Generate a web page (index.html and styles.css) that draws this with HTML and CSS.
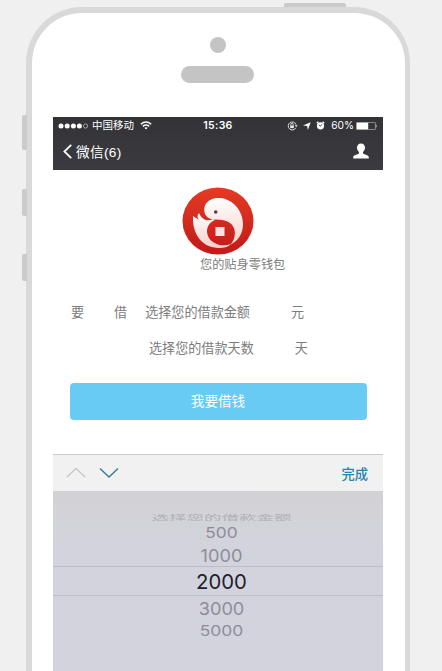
FILE: index.html
```html
<!DOCTYPE html>
<html lang="zh-CN">
<head>
<meta charset="utf-8">
<title>零钱包</title>
<link rel="stylesheet" href="styles.css">
</head>
<body>
<div class="phone">
  <i class="key power"></i><i class="key mute"></i><i class="key up"></i><i class="key down"></i>
  <div class="camera"></div>
  <div class="speaker"></div>
  <main class="screen">
    <header class="top">
      <div class="status">
        <div class="carrier">
          <svg width="31" height="8" viewBox="0 0 31 8" fill="#fff"><circle cx="3" cy="4" r="2.5"/><circle cx="9.2" cy="4" r="2.5"/><circle cx="15.4" cy="4" r="2.5"/><circle cx="21.4" cy="4" r="2.5"/><circle cx="27.6" cy="4" r="2.1" fill="none" stroke="#bbb" stroke-width=".8"/></svg>
          <span class="name">中国移动</span>
          <svg width="12" height="9" viewBox="0 0 12 9" fill="none" stroke="#fff" stroke-width="1.5"><path d="M.8 3.2Q6-1.2 11.2 3.2M2.8 5.3Q6 2.7 9.2 5.3"/><path d="M4.3 6.8Q6 5.5 7.7 6.8L6 8.5Z" fill="#fff" stroke="none"/></svg>
        </div>
        <b class="clock">15:36</b>
        <div class="indicators">
          <svg width="11" height="10" viewBox="0 0 11 10" fill="none" stroke="#eee" stroke-width=".9"><path d="M8.8 6.8A4 4 0 1 1 9 3.6"/><path d="M7.7 4.2H10.7L9.2 6Z" fill="#eee" stroke="none"/><path d="M3.2 4.6h3.6v2.5H3.2z" fill="#eee" stroke="none"/><path d="M3.8 4.7V3.6a1.2 1.2 0 0 1 2.4 0v1.1"/></svg>
          <svg width="8" height="8" viewBox="0 0 8 8" fill="#fff"><path d="M7.7.3 4.8 8 4.2 3.9 0 3.5Z"/></svg>
          <svg width="9" height="9" viewBox="0 0 9 9"><circle cx="4.5" cy="4.8" r="3.6" fill="#fff"/><path d="M.8 2.2 2.4.8M8.2 2.2 6.6.8" stroke="#fff" stroke-width="1.3"/><path d="M4.6 5.1 2.8 4M4.5 5 6.3 3.3" stroke="#37373c" stroke-width=".9"/></svg>
          <span class="percent">60%</span>
          <svg width="22" height="8" viewBox="0 0 22 8"><rect x=".4" y=".4" width="19" height="7.2" rx=".7" fill="none" stroke="#aaa" stroke-width=".8"/><path d="M.7.7h11.5v6.6H.7z" fill="#fff"/><path d="M20.2 2.3q1.3 1.7 0 3.4z" fill="#ddd"/></svg>
        </div>
      </div>
      <nav class="nav">
        <div class="back"><svg width="9" height="15" viewBox="0 0 9 15" fill="none" stroke="#fff" stroke-width="1.8"><path d="M8.2.8 1.4 7.5 8.2 14.2"/></svg><span>微信(6)</span></div>
        <svg width="16" height="16" viewBox="0 0 16 16" fill="#fff"><path d="M8 .4C10.5.4 12 2 12 4.6 12 6.7 11.2 8 10 9v1.4c1.2 1 5.1 1.6 5.6 3.1.2.7.2 1.3.2 1.9H.2c0-.6 0-1.2.2-1.9.5-1.5 4.4-2.1 5.6-3.1V9C4.8 8 4 6.7 4 4.6 4 2 5.5.4 8 .4Z"/></svg>
      </nav>
    </header>
    <section class="page">
      <svg class="logo" width="72" height="68" viewBox="0 0 72 68">
        <defs><linearGradient id="red" x1="0" y1="0" x2="0" y2="1"><stop offset="0" stop-color="#e43b24"/><stop offset="1" stop-color="#c01a1a"/></linearGradient><linearGradient id="pale" x1="0" y1="0" x2="0" y2="1"><stop offset="0" stop-color="#fff"/><stop offset="1" stop-color="#f9cfc8"/></linearGradient></defs>
        <ellipse cx="36" cy="34" rx="35.5" ry="33.6" fill="url(#red)"/>
        <path d="M23.500 28C19 17 28 10 38 11C51 12 61 24 61 37C61 47 56 54 48 58C55 51 54 40 48 36C40 30 29 36 23.500 28Z" fill="url(#pale)"/>
        <path d="M31 32C26 35 20 33 17 26C15 28 15 31 17 33C15 32 13 30 11 29C10 47 20 61 37 61C42 61 46 60 49 57C39 61 26 56 25 45C25 39 28 35 33 33Z" fill="url(#pale)"/>
        <rect x="33.5" y="40" width="9" height="9" rx=".5" fill="#fde5df"/><circle cx="33.7" cy="25" r="1.8" fill="#4d3d62"/>
      </svg>
      <p class="slogan">您的贴身零钱包</p>
      <div class="row amount"><span class="label"><span>要</span><span>借</span></span><span class="value">选择您的借款金额</span><span>元</span></div>
      <div class="row days"><span class="value">选择您的借款天数</span><span>天</span></div>
      <button class="borrow">我要借钱</button>
    </section>
    <div class="toolbar">
      <svg width="54" height="12" viewBox="0 0 54 12" fill="none" stroke-width="1.4"><path d="M1 10 10 1.5 19 10" stroke="#c5c7ca"/><path d="M34 1.5 43 10 52 1.5" stroke="#38799c"/></svg>
      <b>完成</b>
    </div>
    <div class="picker">
      <div class="option far"><span>选择您的借款金额</span></div>
      <div class="option o500"><span>500</span></div>
      <div class="option o1000"><span>1000</span></div>
      <div class="option selected"><span>2000</span></div>
      <div class="option o3000"><span>3000</span></div>
      <div class="option o5000"><span>5000</span></div>
    </div>
  </main>
</div>
</body>
</html>
```
FILE: styles.css
```css
* { box-sizing: border-box; }
body {
  margin: 0; height: 671px; overflow: hidden; background: #f0f0f1;
  padding: 7px 0 0 26px; color: #7c7c7c;
  font-family: "Liberation Sans", "Noto Sans CJK SC", sans-serif;
}
svg { display: block; flex: none; }
.phone {
  position: relative; width: 384px; height: 664px; background: #fff;
  border: 6px solid #d9d9da; border-right-width: 5px; border-bottom: 0; border-radius: 56px 56px 0 0;
  display: flex; flex-direction: column;
}
.key { position: absolute; background: #cbcbcc; left: -10px; width: 5px; border-radius: 2px 0 0 2px; }
.power { left: 252px; top: -10px; width: 62px; height: 4px; border-radius: 2px 2px 0 0; }
.mute { top: 102px; height: 35px; }
.up { top: 176px; height: 27px; }
.down { top: 241px; height: 27px; }
.camera { width: 16px; height: 16px; border-radius: 50%; background: #c4c4c4; margin: 24px 0 0 178px; }
.speaker { width: 73px; height: 17px; border-radius: 9px; background: #c4c4c4; margin: 13px 0 0 149px; }
.screen { width: 330px; margin: 34px 0 0 21px; }
.top { height: 53px; background: linear-gradient(#333337, #3b3a40); color: #fff; }
.status { height: 17px; display: grid; grid-template-columns: 1fr auto 1fr; align-items: center; padding: 0 5px; }
.carrier, .indicators { display: flex; align-items: center; }
.name { font-size: 10.5px; margin: 0 6px 0 3px; line-height: 17px; }
.clock { font: 600 10.5px/17px Inter, sans-serif; letter-spacing: .3px; }
.indicators { justify-content: flex-end; gap: 5px; }
.percent { font: 10.2px/17px Inter, sans-serif; margin: 0 -3px 0 1px; }
.nav { height: 36px; display: flex; align-items: center; justify-content: space-between; padding: 0 14px 2px 10px; }
.back { display: flex; align-items: center; gap: 4px; font-size: 13.7px; letter-spacing: .3px; }
.page { height: 284px; background: #fff; overflow: hidden; }
.logo { margin: 17px 0 0 129px; }
.slogan { font-size: 12.2px; line-height: 18px; margin: 1px 0 0 147px; }
.row { display: flex; font-size: 13.1px; line-height: 20px; white-space: nowrap; }
.amount { margin: 29px 0 0 18px; }
.label { display: flex; gap: 30px; margin-right: 18px; }
.value { margin-right: 41px; }
.days { margin: 16px 0 0 96px; }
.borrow {
  display: block; width: 297px; height: 37px; margin: 24px 0 0 17px; padding: 0 1px 2px 0;
  border: 0; border-radius: 4px; background: #67cbf4; color: #fff; font: 13.6px/33px "Noto Sans CJK SC", sans-serif;
}
.toolbar {
  height: 37px; border-top: 1px solid #c9cacb; background: #f1f1f2;
  display: flex; align-items: center; justify-content: space-between; padding: 0 15px 0 13px;
}
.toolbar b { font-size: 13.3px; font-weight: 500; color: #2883ad; }
.picker { height: 180px; background: linear-gradient(#d2d2d5, #d3d3dd 60px); padding-top: 19px; overflow: hidden; }
.option { display: flex; align-items: center; justify-content: center; font-family: Inter, sans-serif; color: #8d8d99; padding-left: 7px; }
.option span { display: block; white-space: nowrap; }
.far { height: 13px; font: 17.5px "Noto Sans CJK SC", sans-serif; color: #b0b0ba; }
.far span { transform: scaleY(.42); }
.o500 { height: 19px; font-size: 17.3px; }
.o500 span { transform: scaleY(.84); }
.o1000 { height: 24px; font-size: 18.2px; padding-top: 1px; }
.o1000 span { transform: scaleY(.96); }
.selected { height: 30px; font-size: 20.3px; color: #20202b; border: solid #bdbdc6; border-width: 1px 0; }
.o3000 { height: 23px; font-size: 18.2px; }
.o3000 span { transform: scaleY(.96); }
.o5000 { height: 22px; font-size: 17.4px; }
.o5000 span { transform: scaleY(.82); }
```
